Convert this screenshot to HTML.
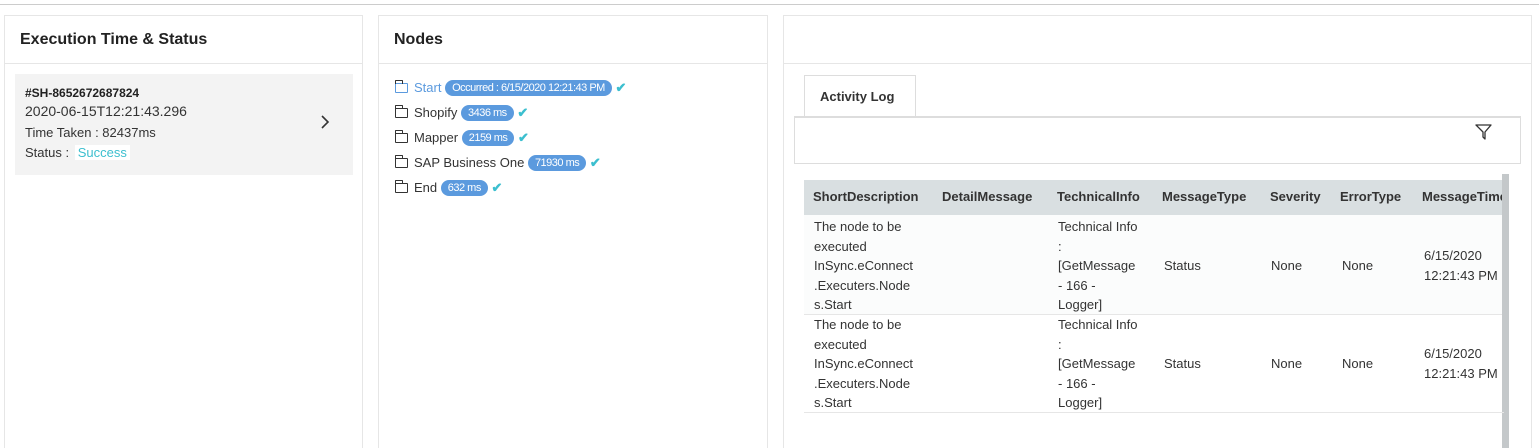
<!DOCTYPE html>
<html style="width:1539px;height:448px;overflow:hidden"><head><meta charset="utf-8"><style>
*{margin:0;padding:0;box-sizing:border-box}
body{width:1539px;height:448px;background:#fff;font-family:"Liberation Sans",Arial,sans-serif;color:#333;position:relative;overflow:hidden}
.a{position:absolute}
.panel{position:absolute;top:15px;height:435px;border:1px solid #e6e6e6;background:#fff}
.ph{position:absolute;left:0;right:0;top:0;height:48px;border-bottom:1px solid #e6e6e6;font-weight:bold;font-size:16px;color:#222;padding:15px 0 0 15px}
.badge{display:inline-block;background:#5b9ade;color:#fff;font-size:11px;border-radius:9px;padding:2px 7px;letter-spacing:-0.5px;vertical-align:1px}
.chk{color:#3cbfcf;font-size:13px;font-weight:bold}
.node{position:absolute;left:16px;font-size:13px;color:#333;white-space:nowrap}
.fold{display:inline-block;width:13px;height:10px;border:1.3px solid #333;border-radius:1px;margin-right:6px;position:relative;vertical-align:-1px}
.fold:before{content:"";position:absolute;left:-1px;top:-4px;width:6px;height:3px;border:1.3px solid #333;border-bottom:none;border-radius:1px 1px 0 0}
.cell{position:absolute;font-size:13px;line-height:19.5px;color:#333}
.th{position:absolute;top:189px;font-size:13px;font-weight:bold;color:#333}
</style></head><body>
<div class="a" style="left:0;top:4px;width:1539px;height:1px;background:#ccc"></div>

<div class="panel" style="left:4px;width:359px">
 <div class="ph">Execution Time &amp; Status</div>
 <div class="a" style="left:10px;top:58px;width:338px;height:101px;background:#f3f3f3">
  <div class="a" style="left:10px;top:12px;font-size:12px;font-weight:bold;color:#222">#SH-8652672687824</div>
  <div class="a" style="left:10px;top:29px;font-size:14px;color:#333">2020-06-15T12:21:43.296</div>
  <div class="a" style="left:10px;top:51px;font-size:13px;color:#333">Time Taken : 82437ms</div>
  <div class="a" style="left:10px;top:71px;font-size:13px;color:#333">Status : <span style="background:#fff;color:#3cbfcf;padding:0 3px;margin-left:2px">Success</span></div>
  <svg class="a" style="left:305px;top:40px" width="10" height="16"><path d="M2 2 L8 8 L2 14" fill="none" stroke="#333" stroke-width="1.6"/></svg>
 </div>
</div>

<div class="panel" style="left:378px;width:390px">
 <div class="ph">Nodes</div>
 <div class="node" style="top:64px;color:#5b9ade"><span class="fold" style="border-color:#5b9ade"></span>Start <span class="badge">Occurred : 6/15/2020 12:21:43 PM</span> <span class="chk">✔</span></div>
 <div class="node" style="top:89px"><span class="fold"></span>Shopify <span class="badge">3436 ms</span> <span class="chk">✔</span></div>
 <div class="node" style="top:114px"><span class="fold"></span>Mapper <span class="badge">2159 ms</span> <span class="chk">✔</span></div>
 <div class="node" style="top:139px"><span class="fold"></span>SAP Business One <span class="badge">71930 ms</span> <span class="chk">✔</span></div>
 <div class="node" style="top:164px"><span class="fold"></span>End <span class="badge">632 ms</span> <span class="chk">✔</span></div>
</div>

<div class="panel" style="left:783px;width:749px">
 <div class="ph"></div>
</div>
<div class="a" style="left:804px;top:75px;width:112px;height:42px;border:1px solid #ddd;border-bottom:none;background:#fff;font-size:13px;font-weight:bold;color:#333;padding:13px 0 0 15px">Activity Log</div>
<div class="a" style="left:794px;top:116px;width:727px;height:48px;border:1px solid #ddd;border-top:2px solid #ddd"></div>
<svg class="a" style="left:1474px;top:122px" width="20" height="20"><path d="M2 3 H17 L11 10 V17 L9 15 V10 Z" fill="none" stroke="#333" stroke-width="1.3" stroke-linejoin="round"/></svg>

<div class="a" style="left:804px;top:180px;width:703px;height:35px;background:#d9dfe1"></div>
<div class="a" style="left:804px;top:215px;width:700px;height:100px;background:#fbfcfc"></div>
<div class="a" style="left:804px;top:314px;width:700px;height:1px;background:#e6e6e6"></div>
<div class="a" style="left:1502px;top:174px;width:7px;height:274px;background:#c4c8ca"></div>
<div class="th" style="left:813px">ShortDescription</div>
<div class="th" style="left:942px">DetailMessage</div>
<div class="th" style="left:1057px">TechnicalInfo</div>
<div class="th" style="left:1162px">MessageType</div>
<div class="th" style="left:1270px">Severity</div>
<div class="th" style="left:1340px">ErrorType</div>
<div class="th" style="left:1422px;width:80px;overflow:hidden;white-space:nowrap">MessageTime</div>

<div class="cell" style="left:814px;top:217px">The node to be<br>executed<br>InSync.eConnect<br>.Executers.Node<br>s.Start</div>
<div class="cell" style="left:1058px;top:217px">Technical Info<br>:<br>[GetMessage<br>- 166 -<br>Logger]</div>
<div class="cell" style="left:1164px;top:256px">Status</div>
<div class="cell" style="left:1271px;top:256px">None</div>
<div class="cell" style="left:1342px;top:256px">None</div>
<div class="cell" style="left:1424px;top:246px;width:80px;overflow:hidden;white-space:nowrap">6/15/2020<br>12:21:43 PM</div>

<div class="cell" style="left:814px;top:315px">The node to be<br>executed<br>InSync.eConnect<br>.Executers.Node<br>s.Start</div>
<div class="cell" style="left:1058px;top:315px">Technical Info<br>:<br>[GetMessage<br>- 166 -<br>Logger]</div>
<div class="cell" style="left:1164px;top:354px">Status</div>
<div class="cell" style="left:1271px;top:354px">None</div>
<div class="cell" style="left:1342px;top:354px">None</div>
<div class="cell" style="left:1424px;top:344px;width:80px;overflow:hidden;white-space:nowrap">6/15/2020<br>12:21:43 PM</div>
<div class="a" style="left:804px;top:412px;width:700px;height:1px;background:#e6e6e6"></div>
</body></html>
